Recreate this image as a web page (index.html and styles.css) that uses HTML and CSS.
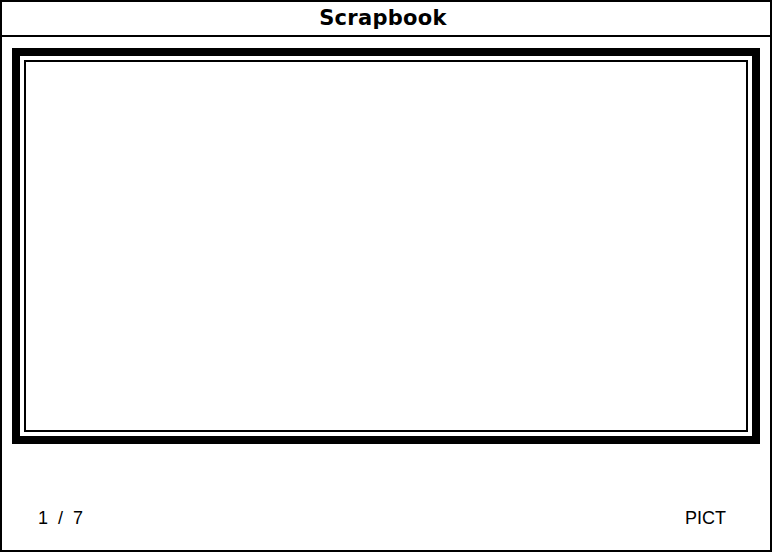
FILE: index.html
```html
<!DOCTYPE html>
<html>

<head>
    <meta charset="UTF-8">
    <title>Scrapbook</title>
    <link rel="stylesheet" href="styles.css">
</head>

<body>
    <div class="window">
        <header class="title-bar">
            <h1 class="title">Scrapbook</h1>
        </header>

        <div class="content">
            <div class="frame">
                <div class="picture"></div>
            </div>
        </div>

        <footer class="status">
            <span class="count">1 / 7</span>
            <span class="kind">PICT</span>
        </footer>
    </div>
</body>

</html>
```

FILE: styles.css
```css
html,
body {
    margin: 0;
    padding: 0;
    background: #fff;
}

body {
    font-family: "Liberation Sans", Arial, sans-serif;
    color: #000;
}

.window {
    box-sizing: border-box;
    width: 772px;
    height: 552px;
    border: 2px solid #000;
    display: flex;
    flex-direction: column;
}

.title-bar {
    height: 33px;
    border-bottom: 2px solid #000;
    display: flex;
    align-items: center;
    justify-content: center;
    padding-right: 6px;
}

.title {
    margin: 0;
    font-family: "DejaVu Sans", sans-serif;
    font-weight: bold;
    font-size: 21px;
    line-height: 33px;
    letter-spacing: 0.3px;
}

.content {
    padding: 11px 10px 0 10px;
}

.frame {
    box-sizing: border-box;
    height: 396px;
    border: 8px solid #000;
    padding: 4px;
}

.picture {
    box-sizing: border-box;
    height: 100%;
    border: 2px solid #000;
}

.status {
    display: flex;
    justify-content: space-between;
    padding: 64px 44px 0 36px;
    font-size: 18px;
    line-height: 20px;
}

.count {
    word-spacing: 5px;
}
```
